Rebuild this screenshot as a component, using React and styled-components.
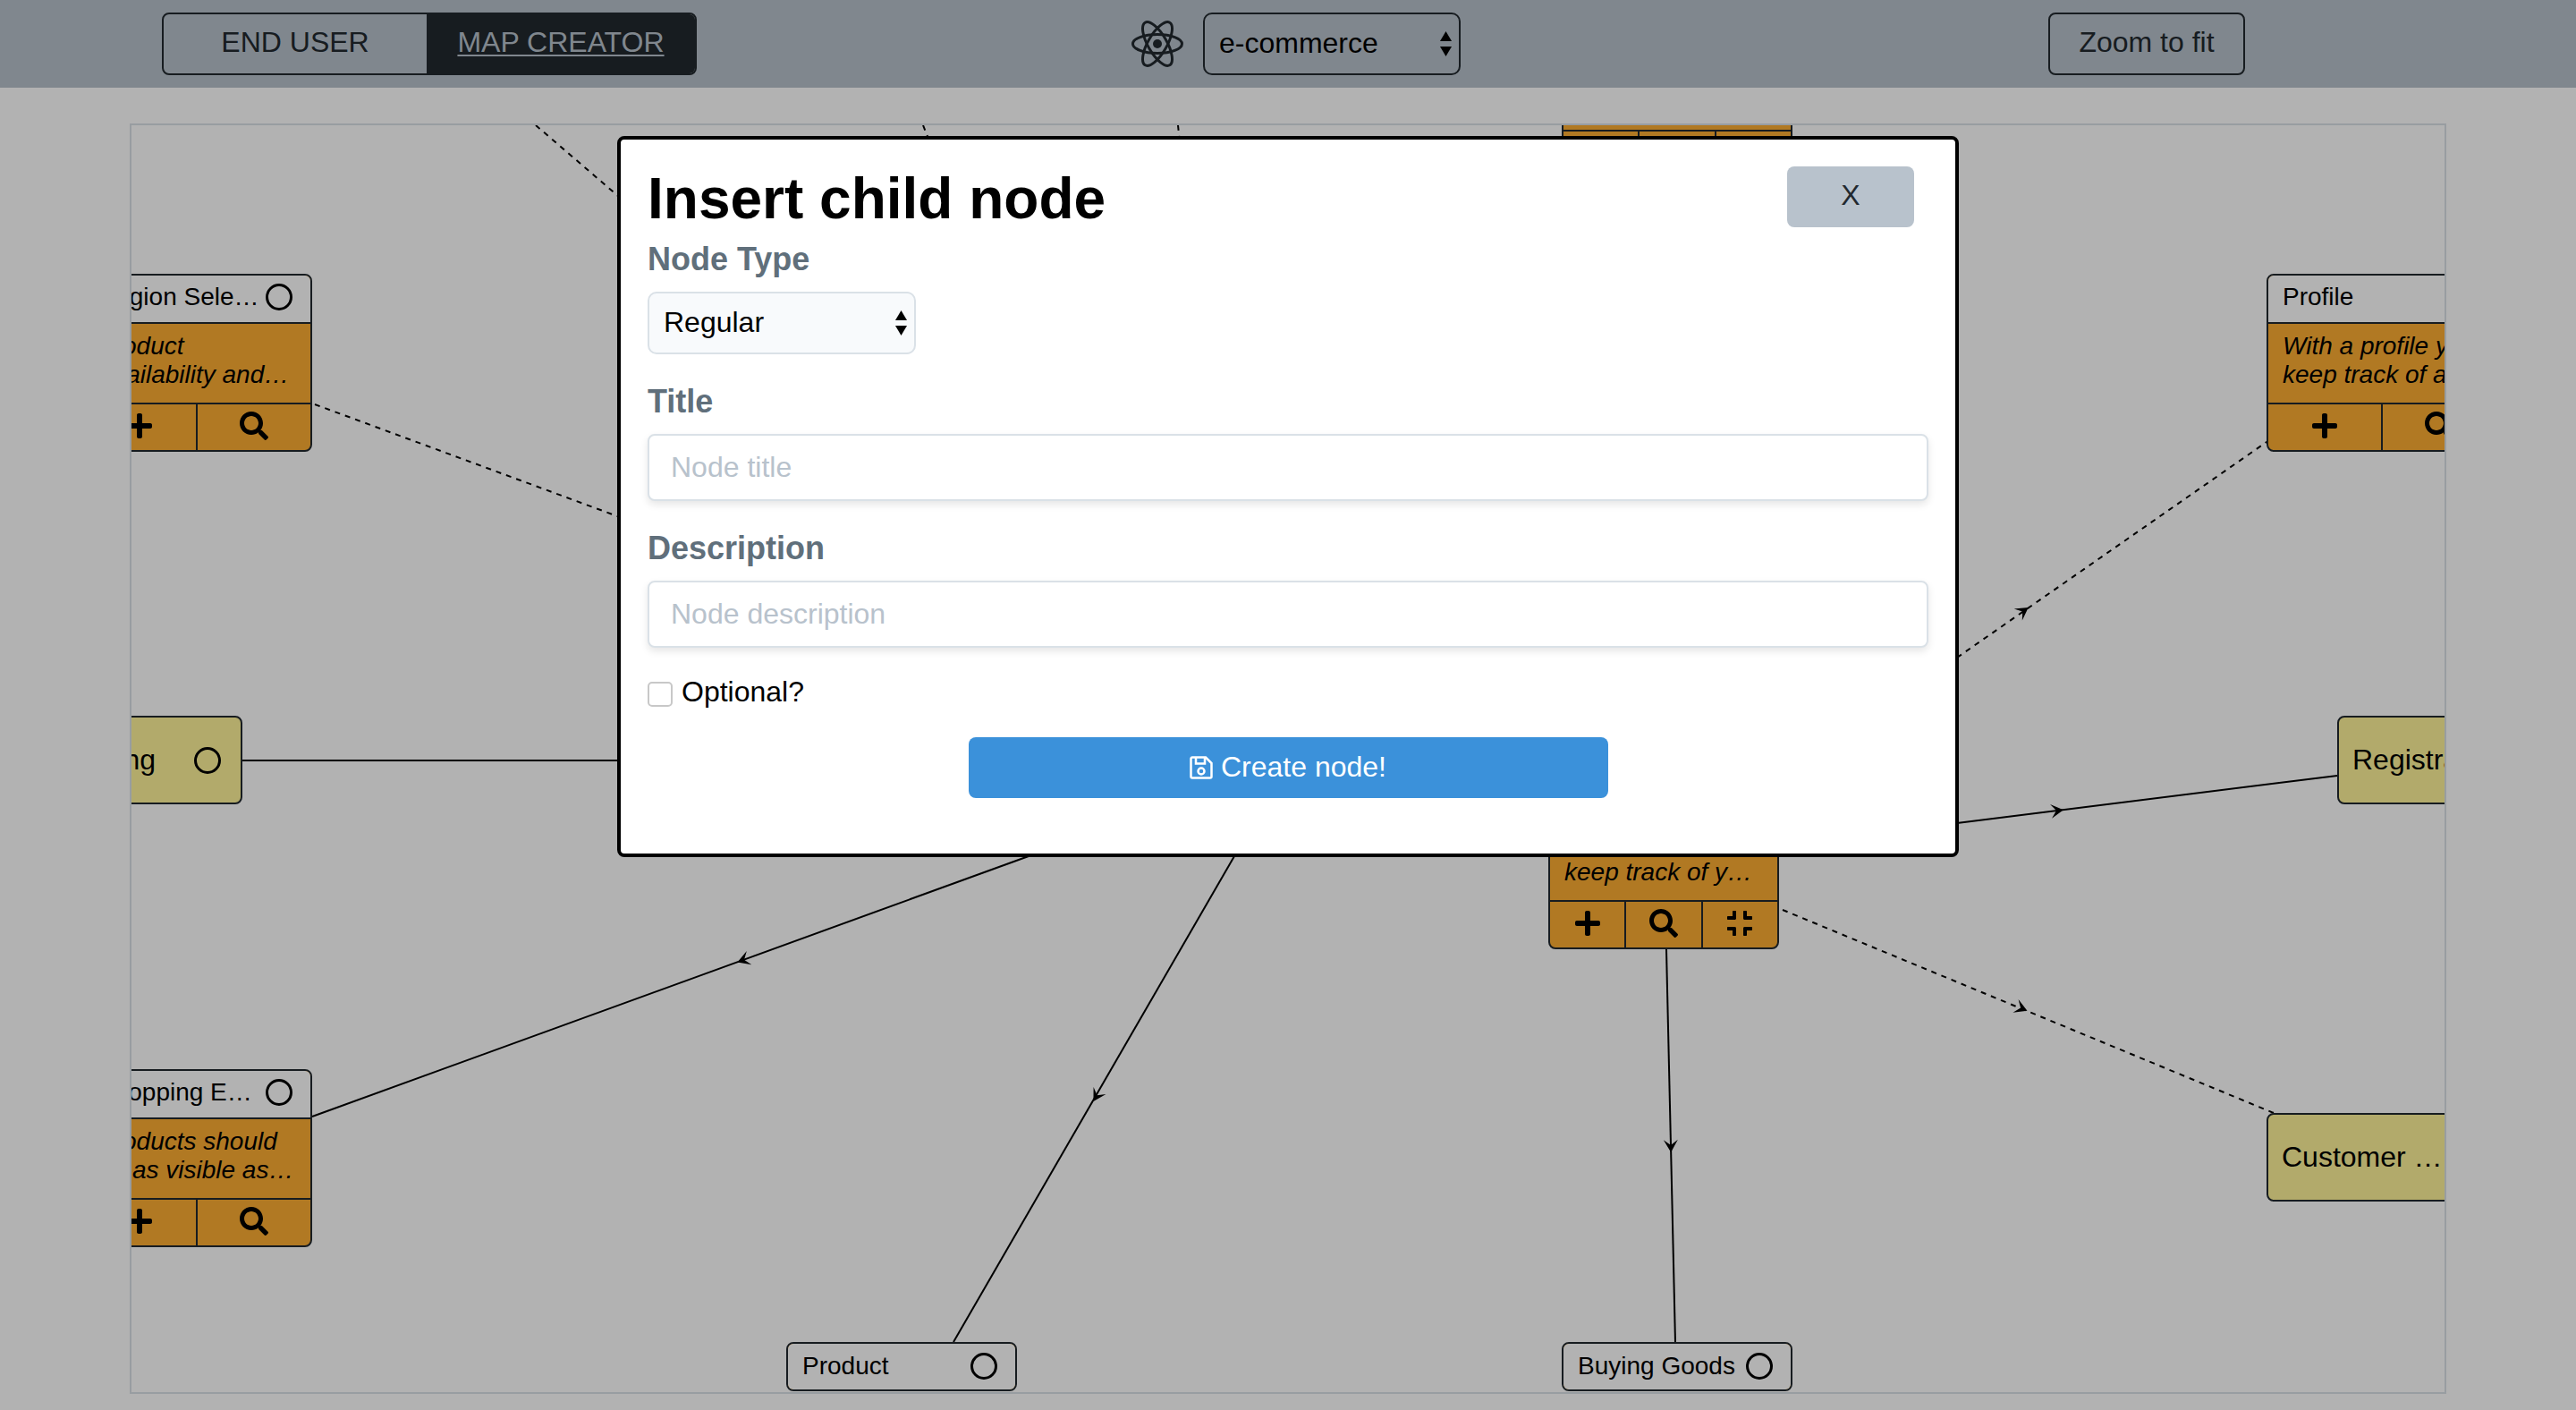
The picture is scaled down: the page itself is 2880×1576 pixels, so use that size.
import React from "react";
import styled, { createGlobalStyle } from "styled-components";
import { FaPlus, FaSearch, FaCompress } from "react-icons/fa";

const GlobalStyle = createGlobalStyle`
  * {
    box-sizing: border-box;
  }

  html,
  body {
    margin: 0;
    height: 100%;
    overflow: hidden;
    background: #fff;
    font-family: "Liberation Sans", Arial, sans-serif;
    color: #22292f;
  }
`;

const Toolbar = styled.header`
  height: 98px;
  background: #b8c2cc;
  display: grid;
  grid-template-columns: repeat(3, 1fr);
  align-items: center;
  justify-items: center;
`;

const ModeSwitch = styled.div`
  display: flex;
  height: 70px;
  border: 2px solid #22292f;
  border-radius: 8px;
  overflow: hidden;
`;

const ModeOption = styled.div`
  width: ${(p) => p.$width}px;
  display: flex;
  align-items: center;
  justify-content: center;
  padding-bottom: 4px;
  font-size: 32px;
  background: ${(p) => (p.$active ? "#22292f" : "transparent")};
  color: ${(p) => (p.$active ? "#b8c2cc" : "#22292f")};
  text-decoration: ${(p) => (p.$active ? "underline" : "none")};
  text-decoration-thickness: 2px;
  text-underline-offset: 3px;
`;

const MapPicker = styled.div`
  display: flex;
  align-items: center;
  gap: 22px;
  margin-left: 18px;
`;

const SelectWrap = styled.div`
  position: relative;
  width: ${(p) => p.$width}px;
`;

const Select = styled.select`
  appearance: none;
  display: block;
  width: 100%;
  height: ${(p) => p.$height}px;
  padding: 0 16px 2px;
  font: 32px "Liberation Sans", Arial, sans-serif;
  color: #000;
  background: ${(p) => (p.$light ? "#f8fafc" : "transparent")};
  border: 2px solid ${(p) => (p.$light ? "#dae1e7" : "#22292f")};
  border-radius: 10px;
  outline: none;
`;

const Arrows = styled.svg`
  position: absolute;
  top: 50%;
  right: 10px;
  transform: translateY(-50%);
  pointer-events: none;
`;

const ZoomButton = styled.button`
  height: 70px;
  padding: 0 32px 3px;
  background: transparent;
  border: 2px solid #22292f;
  border-radius: 8px;
  font: 32px "Liberation Sans", Arial, sans-serif;
  color: #22292f;
`;

const Canvas = styled.main`
  position: relative;
  width: 2590px;
  height: 1420px;
  margin: 40px auto 0;
  border: 2px solid #dae1e7;
  overflow: hidden;
`;

const Edges = styled.svg`
  position: absolute;
  top: 0;
  left: 0;
`;

const Node = styled.div`
  position: absolute;
  left: ${(p) => p.$x}px;
  top: ${(p) => p.$y}px;
  width: 258px;
  height: ${(p) => p.$height}px;
  display: flex;
  flex-direction: column;
  background: ${(p) => (p.$khaki ? "#fff49a" : "#feae33")};
  border: 2px solid #22292f;
  border-radius: 8px;
  color: #000;
`;

const NodeHeader = styled.div`
  flex: ${(p) => (p.$grow ? 1 : "0 0 54px")};
  display: flex;
  align-items: center;
  gap: 6px;
  padding: 0 20px ${(p) => (p.$grow ? "2px" : "4px")} 16px;
  background: #fff;
  border-radius: ${(p) => (p.$grow ? "6px" : "6px 6px 0 0")};
  border-bottom: ${(p) => (p.$grow ? "none" : "2px solid #22292f")};
  font-size: 28px;
`;

const KhakiRow = styled.div`
  flex: 1;
  display: flex;
  align-items: center;
  gap: 4px;
  padding: 0 22px 0 15px;
  font-size: 32px;
`;

const NodeTitle = styled.span`
  flex: 1;
  min-width: 0;
  white-space: nowrap;
  overflow: hidden;
  text-overflow: ellipsis;
`;

const Ring = styled.span`
  flex: 0 0 30px;
  height: 30px;
  border: 3px solid #000;
  border-radius: 50%;
`;

const NodeBody = styled.div`
  flex: 0 0 90px;
  padding: 9px 16px 0;
  font-size: 28px;
  line-height: 32px;
  font-style: italic;
  white-space: pre;
  border-bottom: 2px solid #22292f;
  overflow: hidden;
`;

const NodeActions = styled.div`
  flex: 1;
  display: flex;
`;

const ActionCell = styled.div`
  flex: 1;
  display: flex;
  align-items: center;
  justify-content: center;
  padding-bottom: 3px;
  font-size: 32px;

  & + & {
    border-left: 2px solid #22292f;
  }
`;

const Backdrop = styled.div`
  position: fixed;
  inset: 0;
  display: flex;
  justify-content: center;
  align-items: flex-start;
  padding-top: 152px;
  background: rgba(0, 0, 0, 0.3);
`;

const Modal = styled.form`
  width: 1500px;
  height: 806px;
  display: flex;
  flex-direction: column;
  padding: 30px 30px 0 30px;
  background: #fff;
  border: 4px solid #000;
  border-radius: 8px;
`;

const ModalHead = styled.div`
  display: flex;
  justify-content: space-between;
  align-items: flex-start;
  margin-bottom: 12px;
`;

const ModalTitle = styled.h1`
  margin: 0;
  font-size: 64px;
  line-height: 72px;
  font-weight: 700;
  color: #000;
`;

const CloseButton = styled.button`
  width: 142px;
  height: 68px;
  margin-right: 16px;
  padding: 0 0 3px;
  background: #b8c2cc;
  border: none;
  border-radius: 8px;
  font: 32px "Liberation Sans", Arial, sans-serif;
  color: #22292f;
`;

const Field = styled.div`
  & + & {
    margin-top: 33px;
  }
`;

const FieldLabel = styled.label`
  display: block;
  margin-bottom: 16px;
  font-size: 36px;
  line-height: 40px;
  font-weight: 700;
  color: #606f7b;
`;

const TextInput = styled.input`
  display: block;
  width: 100%;
  height: 75px;
  padding: 0 24px;
  font: 32px "Liberation Sans", Arial, sans-serif;
  background: #fff;
  border: 2px solid #dae1e7;
  border-radius: 8px;
  box-shadow: 0 4px 8px 0 rgba(0, 0, 0, 0.1);
  outline: none;

  &::placeholder {
    color: #b8c2cc;
    opacity: 1;
  }
`;

const CheckRow = styled.label`
  display: flex;
  align-items: flex-start;
  gap: 10px;
  margin-top: 31px;
  font-size: 32px;
  line-height: 36px;
  color: #000;
`;

const CheckBox = styled.input`
  appearance: none;
  width: 28px;
  height: 28px;
  margin: 7px 0 0;
  background: #fff;
  border: 2px solid #c8c8c8;
  border-radius: 5px;
`;

const CreateButton = styled.button`
  align-self: center;
  display: flex;
  align-items: center;
  justify-content: center;
  gap: 9px;
  width: 715px;
  height: 68px;
  margin-top: 33px;
  padding: 0 0 1px;
  background: #3b91da;
  border: none;
  border-radius: 8px;
  font: 32px "Liberation Sans", Arial, sans-serif;
  color: #fff;
`;

const edges = [
  { from: [599, 140], to: [720, 244], dashed: true },
  { from: [1032, 140], to: [1040, 160], dashed: true },
  { from: [1317, 140], to: [1319, 160], dashed: true },
  { from: [352, 452], to: [720, 588], dashed: true },
  { from: [271, 850], to: [692, 850] },
  { from: [349, 1248], to: [1150, 957], arrow: [831, 1073], reverse: true },
  { from: [1066, 1500], to: [1380, 957], arrow: [1226, 1225], reverse: true },
  { from: [1863, 1061], to: [1873, 1500], arrow: [1868, 1281] },
  { from: [1993, 1017], to: [2542, 1244], arrow: [2260, 1127], dashed: true },
  { from: [2188, 735], to: [2537, 492], arrow: [2262, 683], dashed: true },
  { from: [2188, 920], to: [2613, 867], arrow: [2300, 906] },
];

const detailNodes = [
  {
    x: -56,
    y: 166,
    title: "Region Selection",
    body: "Product\nAvailability and…",
    actions: 2,
  },
  {
    x: 2387,
    y: 166,
    title: "Profile",
    body: "With a profile you can\nkeep track of all…",
    actions: 2,
  },
  {
    x: -56,
    y: 1055,
    title: "Shopping Experience",
    body: "Products should\nbe as visible as…",
    actions: 2,
  },
  {
    x: 1584,
    y: 722,
    title: "Account",
    body: "With an account you\nkeep track of y…",
    actions: 3,
  },
  { x: 1599, y: -139, title: "Checkout", body: "Paying for goods", actions: 3 },
];

const khakiNodes = [
  { x: -134, y: 660, title: "Searching" },
  { x: 2466, y: 660, title: "Registration" },
  { x: 2387, y: 1104, title: "Customer Service" },
];

const leafNodes = [
  { x: 732, y: 1360, title: "Product" },
  { x: 1599, y: 1360, title: "Buying Goods" },
];

const actionIcons = [FaPlus, FaSearch, FaCompress];

const UpDown = () => (
  <Arrows width="13" height="28" viewBox="0 0 13 28">
    <polygon points="6.5,0 13,11 0,11" fill="#000" />
    <polygon points="0,17 13,17 6.5,28" fill="#000" />
  </Arrows>
);

const AtomIcon = () => (
  <svg width="58" height="54" viewBox="-29 -27 58 54" fill="none" stroke="#22292f" strokeWidth="3">
    <ellipse rx="27.5" ry="10.5" />
    <ellipse rx="27.5" ry="10.5" transform="rotate(60)" />
    <ellipse rx="27.5" ry="10.5" transform="rotate(120)" />
    <circle r="5" fill="#22292f" stroke="none" />
  </svg>
);

const SaveIcon = () => (
  <svg width="26" height="26" viewBox="0 0 26 26" fill="none" stroke="#fff" strokeWidth="2.5">
    <path d="M3 1.5h15l6.5 6.5v15a1.5 1.5 0 0 1-1.5 1.5H3A1.5 1.5 0 0 1 1.5 23V3A1.5 1.5 0 0 1 3 1.5z" />
    <path d="M7 1.5v7h10v-7" />
    <circle cx="13" cy="17" r="3.5" />
  </svg>
);

const Edge = ({ from, to, dashed, arrow, reverse }) => {
  const angle = (Math.atan2(to[1] - from[1], to[0] - from[0]) * 180) / Math.PI;
  return (
    <g>
      <line
        x1={from[0]}
        y1={from[1]}
        x2={to[0]}
        y2={to[1]}
        stroke="#000"
        strokeWidth="2"
        strokeDasharray={dashed ? "6 6" : undefined}
      />
      {arrow && (
        <path
          d="M7 0L-7-8L-1 0L-7 8Z"
          fill="#000"
          transform={`translate(${arrow[0]} ${arrow[1]}) rotate(${reverse ? angle + 180 : angle})`}
        />
      )}
    </g>
  );
};

const DetailNode = ({ x, y, title, body, actions }) => (
  <Node $x={x} $y={y} $height={199}>
    <NodeHeader>
      <NodeTitle>{title}</NodeTitle>
      <Ring />
    </NodeHeader>
    <NodeBody>{body}</NodeBody>
    <NodeActions>
      {actionIcons.slice(0, actions).map((Icon, i) => (
        <ActionCell key={i}>
          <Icon />
        </ActionCell>
      ))}
    </NodeActions>
  </Node>
);

const App = () => (
  <>
    <GlobalStyle />
    <Toolbar>
      <ModeSwitch>
        <ModeOption $width={294}>END USER</ModeOption>
        <ModeOption $width={300} $active>
          MAP CREATOR
        </ModeOption>
      </ModeSwitch>
      <MapPicker>
        <AtomIcon />
        <SelectWrap $width={288}>
          <Select $height={70} defaultValue="e-commerce">
            <option>e-commerce</option>
          </Select>
          <UpDown />
        </SelectWrap>
      </MapPicker>
      <ZoomButton>Zoom to fit</ZoomButton>
    </Toolbar>

    <Canvas>
      <Edges width="2586" height="1416" viewBox="147 140 2586 1416">
        {edges.map((edge, i) => (
          <Edge key={i} {...edge} />
        ))}
      </Edges>
      {detailNodes.map((node) => (
        <DetailNode key={node.title} {...node} />
      ))}
      {khakiNodes.map((node) => (
        <Node key={node.title} $x={node.x} $y={node.y} $height={99} $khaki>
          <KhakiRow>
            <NodeTitle>{node.title}</NodeTitle>
            <Ring />
          </KhakiRow>
        </Node>
      ))}
      {leafNodes.map((node) => (
        <Node key={node.title} $x={node.x} $y={node.y} $height={55}>
          <NodeHeader $grow>
            <NodeTitle>{node.title}</NodeTitle>
            <Ring />
          </NodeHeader>
        </Node>
      ))}
    </Canvas>

    <Backdrop>
      <Modal>
        <ModalHead>
          <ModalTitle>Insert child node</ModalTitle>
          <CloseButton type="button">X</CloseButton>
        </ModalHead>
        <Field>
          <FieldLabel>Node Type</FieldLabel>
          <SelectWrap $width={300}>
            <Select $height={70} $light defaultValue="Regular">
              <option>Regular</option>
            </Select>
            <UpDown />
          </SelectWrap>
        </Field>
        <Field>
          <FieldLabel>Title</FieldLabel>
          <TextInput placeholder="Node title" />
        </Field>
        <Field>
          <FieldLabel>Description</FieldLabel>
          <TextInput placeholder="Node description" />
        </Field>
        <CheckRow>
          <CheckBox type="checkbox" />
          Optional?
        </CheckRow>
        <CreateButton type="button">
          <SaveIcon />
          Create node!
        </CreateButton>
      </Modal>
    </Backdrop>
  </>
);

export default App;
